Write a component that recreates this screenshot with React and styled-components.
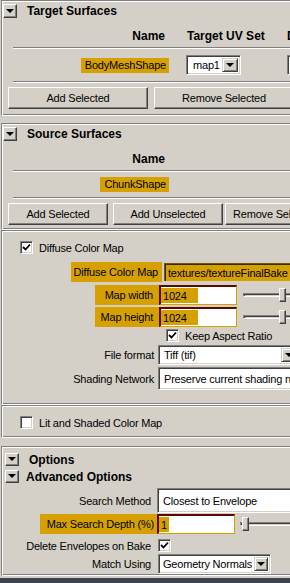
import React from "react";
import styled, { createGlobalStyle } from "styled-components";

const FACE = "#d4d0c8";
const HI = "#d6a100";

const GlobalStyle = createGlobalStyle`
  html, body {
    margin: 0;
    padding: 0;
  }
  body {
    background: ${FACE};
    font-family: "Liberation Sans", Arial, sans-serif;
    font-size: 11px;
    letter-spacing: -0.2px;
    color: #000;
    overflow: hidden;
  }
`;

const Window = styled.div`
  width: 290px;
  height: 583px;
  display: flex;
  flex-direction: column;
  overflow: hidden;
`;

const Panel = styled.div`
  flex: 1;
  width: 340px;
  overflow: hidden;
`;

const BottomEdge = styled.div`
  height: 5px;
  flex: none;
  background: #3b4450;
`;

// etched-in frame, like a Maya frameLayout
const Frame = styled.div`
  margin: ${(p) => p.$mt || 0}px 0 0 1px;
  padding: ${(p) => (p.$pt || 0) + 1}px 0 ${(p) => (p.$pb || 0) + 1}px 1px;
  border-top: 1px solid #808080;
  border-left: 1px solid #808080;
  border-bottom: 1px solid #fff;
  box-shadow: inset 1px 1px 0 #fff, inset 0 -1px 0 #808080;
`;

const FrameHeader = styled.div`
  display: flex;
  align-items: center;
  height: ${(p) => p.$h || 18}px;
  padding-left: ${(p) => p.$pl || 0}px;
`;

const CollapseButton = styled.div`
  width: 14px;
  height: ${(p) => p.$h || 14}px;
  box-sizing: border-box;
  flex: none;
  background: ${FACE};
  border-top: 1px solid #fff;
  border-left: 1px solid #fff;
  border-right: 1px solid #404040;
  border-bottom: 1px solid #404040;
  box-shadow: inset -1px -1px 0 #808080;
  display: flex;
  align-items: center;
  justify-content: center;
  &::after {
    content: "";
    border-left: 4px solid transparent;
    border-right: 4px solid transparent;
    border-top: 4px solid #000;
    margin: 0 1px 1px 0;
  }
`;

const FrameTitle = styled.span`
  margin-left: ${(p) => p.$gap ?? 10}px;
  font-weight: bold;
  font-size: 12px;
  letter-spacing: 0;
  white-space: nowrap;
`;

const ColumnHeader = styled.div`
  display: flex;
  height: 27px;
  box-sizing: border-box;
  padding-top: 5px;
  font-weight: bold;
  font-size: 12px;
  letter-spacing: 0;
  line-height: 13px;
  white-space: nowrap;
`;

const Cell = styled.div`
  flex: none;
  width: ${(p) => p.$w}px;
  box-sizing: border-box;
  display: flex;
  align-items: center;
  justify-content: ${(p) => (p.$right ? "flex-end" : "flex-start")};
  padding: 0 ${(p) => p.$pr || 0}px 0 ${(p) => p.$pl || 0}px;
`;

const TableRow = styled.div`
  display: flex;
  align-items: center;
  padding: ${(p) => p.$pad}px 0;
`;

const Separator = styled.div`
  margin-left: 10px;
  border-top: 1px solid #808080;
  border-bottom: 1px solid #fff;
`;

const NameTag = styled.span`
  background: ${HI};
  height: 15px;
  line-height: 15px;
  padding: 0 3px 0 4px;
  white-space: nowrap;
`;

const ButtonRow = styled.div`
  display: flex;
  margin-top: 4px;
  padding-left: 5px;
`;

const Button = styled.div`
  flex: none;
  width: ${(p) => p.$w}px;
  height: 22px;
  margin-left: ${(p) => p.$ml || 0}px;
  box-sizing: border-box;
  display: flex;
  align-items: center;
  justify-content: center;
  white-space: nowrap;
  background: ${FACE};
  border-top: 1px solid #fff;
  border-left: 1px solid #fff;
  border-right: 1px solid #404040;
  border-bottom: 1px solid #404040;
  box-shadow: inset -1px -1px 0 #808080;
`;

const Sunken = styled.div`
  box-sizing: border-box;
  border-top: 1px solid #808080;
  border-left: 1px solid #808080;
  border-right: 1px solid #fff;
  border-bottom: 1px solid #fff;
  box-shadow: inset 1px 1px 0 #404040, inset -1px -1px 0 ${FACE};
`;

const OptionMenu = styled(Sunken)`
  flex: none;
  width: ${(p) => p.$w}px;
  height: ${(p) => p.$h || 20}px;
  display: flex;
  align-items: center;
  background: #fff;
  padding: 2px 2px 2px ${(p) => p.$pl || 5}px;
`;

const MenuText = styled.span`
  flex: 1;
  white-space: nowrap;
  overflow: hidden;
`;

const DropArrow = styled.span`
  flex: none;
  width: ${(p) => p.$w || 16}px;
  align-self: stretch;
  box-sizing: border-box;
  background: ${FACE};
  border-top: 1px solid ${FACE};
  border-left: 1px solid ${FACE};
  border-right: 1px solid #404040;
  border-bottom: 1px solid #404040;
  box-shadow: inset 1px 1px 0 #fff, inset -1px -1px 0 #808080;
  display: flex;
  align-items: center;
  justify-content: center;
  &::after {
    content: "";
    border-left: 4px solid transparent;
    border-right: 4px solid transparent;
    border-top: 4px solid #000;
  }
`;

const CheckRow = styled.div`
  display: flex;
  align-items: center;
  margin-top: ${(p) => p.$mt || 0}px;
  padding-left: ${(p) => p.$pl || 0}px;
`;

const CheckBox = styled(Sunken)`
  flex: none;
  width: 13px;
  height: 13px;
  background: #fff;
  display: flex;
  align-items: center;
  justify-content: center;
`;

const CheckLabel = styled.span`
  margin-left: ${(p) => p.$gap ?? 6}px;
  white-space: nowrap;
`;

const FormRow = styled.div`
  display: flex;
  align-items: center;
  height: ${(p) => p.$h || 20}px;
  margin-top: ${(p) => p.$mt || 0}px;
`;

const LabelCell = styled.div`
  flex: none;
  width: ${(p) => p.$w}px;
  height: 100%;
  box-sizing: border-box;
  display: flex;
  align-items: center;
  justify-content: flex-end;
  padding-right: ${(p) => p.$pr || 0}px;
  white-space: nowrap;
`;

const HiLabel = styled.span`
  width: ${(p) => p.$w}px;
  height: 100%;
  box-sizing: border-box;
  display: flex;
  align-items: center;
  justify-content: flex-end;
  padding-right: ${(p) => p.$pr || 4}px;
  background: ${HI};
  white-space: nowrap;
`;

const HiTextField = styled.div`
  flex: none;
  width: 200px;
  height: 18px;
  margin-left: 2px;
  box-sizing: border-box;
  display: flex;
  align-items: center;
  padding-left: 3px;
  background: ${HI};
  border-top: 1px solid #6a5418;
  border-left: 1px solid #6a5418;
  box-shadow: inset 1px 1px 0 #3a2c00;
  white-space: nowrap;
`;

const NumField = styled.div`
  flex: none;
  width: ${(p) => p.$w}px;
  height: 100%;
  box-sizing: border-box;
  display: flex;
  align-items: center;
  background: #fff;
  border-top: 2px solid #5a0800;
  border-left: 2px solid #5a0800;
  border-right: 1px solid ${HI};
  border-bottom: 1px solid ${HI};
  padding: 1px 0;
`;

const NumValue = styled.span`
  width: ${(p) => p.$w}px;
  height: 100%;
  box-sizing: border-box;
  padding-left: 2px;
  display: flex;
  align-items: center;
  background: ${HI};
`;

const Slider = styled.div`
  position: relative;
  flex: none;
  width: 90px;
  height: 100%;
  margin-left: ${(p) => p.$ml || 6}px;
`;

const Groove = styled(Sunken)`
  position: absolute;
  left: 0;
  right: 0;
  top: 50%;
  height: 4px;
  margin-top: -2px;
  background: ${FACE};
`;

const Thumb = styled.div`
  position: absolute;
  top: 50%;
  width: 7px;
  height: 14px;
  margin-top: -7px;
  box-sizing: border-box;
  background: ${FACE};
  border-top: 1px solid #fff;
  border-left: 1px solid #fff;
  border-right: 1px solid #404040;
  border-bottom: 1px solid #404040;
  box-shadow: inset -1px -1px 0 #808080;
`;

const Gap = styled.div`
  flex: none;
  width: ${(p) => p.$w}px;
`;

function Check({ on }) {
  return (
    <CheckBox>
      {on && (
        <svg width="9" height="9" viewBox="0 0 9 9">
          <polyline points="1,4 3.5,6.5 8,1.5" fill="none" stroke="#000" strokeWidth="1.8" />
        </svg>
      )}
    </CheckBox>
  );
}

function Header({ title, h, btnH, gap, pl }) {
  return (
    <FrameHeader $h={h} $pl={pl}>
      <CollapseButton $h={btnH} />
      <FrameTitle $gap={gap}>{title}</FrameTitle>
    </FrameHeader>
  );
}

function SliderField({ value, thumb, ml, valueW, fieldW }) {
  return (
    <>
      <NumField $w={fieldW}>
        <NumValue $w={valueW}>{value}</NumValue>
      </NumField>
      <Slider $ml={ml}>
        <Groove />
        <Thumb style={{ left: thumb }} />
      </Slider>
    </>
  );
}

export default function App() {
  return (
    <Window>
      <GlobalStyle />
      <Panel>
        <Frame $pb={5}>
          <Header title="Target Surfaces" />
          <ColumnHeader>
            <Cell $w={170} $right $pr={8}>Name</Cell>
            <Cell $w={114} $pl={14}>Target UV Set</Cell>
            <Cell $w={40}>D</Cell>
          </ColumnHeader>
          <Separator />
          <TableRow $pad={6}>
            <Cell $w={170} $right $pr={4}>
              <NameTag>BodyMeshShape</NameTag>
            </Cell>
            <Cell $w={114} $pl={13}>
              <OptionMenu $w={55} $pl={6}>
                <MenuText>map1</MenuText>
                <DropArrow />
              </OptionMenu>
            </Cell>
            <Cell $w={40}>
              <OptionMenu $w={40} />
            </Cell>
          </TableRow>
          <Separator />
          <ButtonRow>
            <Button $w={140}>Add Selected</Button>
            <Button $w={140} $ml={6}>Remove Selected</Button>
          </ButtonRow>
        </Frame>

        <Frame $mt={7} $pb={3}>
          <Header title="Source Surfaces" />
          <ColumnHeader>
            <Cell $w={170} $right $pr={8}>Name</Cell>
          </ColumnHeader>
          <Separator />
          <TableRow $pad={5}>
            <Cell $w={170} $right $pr={4}>
              <NameTag>ChunkShape</NameTag>
            </Cell>
          </TableRow>
          <Separator />
          <ButtonRow>
            <Button $w={100}>Add Selected</Button>
            <Button $w={110} $ml={5}>Add Unselected</Button>
            <Button $w={100} $ml={2}>Remove Selected</Button>
          </ButtonRow>
        </Frame>

        <Frame $pb={13}>
          <CheckRow $mt={9} $pl={17}>
            <Check on />
            <CheckLabel>Diffuse Color Map</CheckLabel>
          </CheckRow>
          <FormRow $mt={8}>
            <LabelCell $w={159}>
              <HiLabel $w={91} $pr={4}>Diffuse Color Map</HiLabel>
            </LabelCell>
            <HiTextField>textures/textureFinalBake</HiTextField>
          </FormRow>
          <FormRow $mt={3}>
            <LabelCell $w={156}>
              <HiLabel $w={64} $pr={6}>Map width</HiLabel>
            </LabelCell>
            <SliderField value="1024" thumb={36} fieldW={78} valueW={37} />
          </FormRow>
          <FormRow $mt={2}>
            <LabelCell $w={156}>
              <HiLabel $w={64} $pr={6}>Map height</HiLabel>
            </LabelCell>
            <SliderField value="1024" thumb={36} fieldW={78} valueW={37} />
          </FormRow>
          <CheckRow $mt={2} $pl={163}>
            <Check on />
            <CheckLabel $gap={6}>Keep Aspect Ratio</CheckLabel>
          </CheckRow>
          <FormRow $mt={3}>
            <LabelCell $w={155} $pr={4}>File format</LabelCell>
            <OptionMenu $w={142}>
              <MenuText>Tiff (tif)</MenuText>
              <DropArrow />
            </OptionMenu>
          </FormRow>
          <FormRow $mt={2} $h={23}>
            <LabelCell $w={155} $pr={4}>Shading Network</LabelCell>
            <OptionMenu $w={170} $h={23}>
              <MenuText>Preserve current shading network</MenuText>
            </OptionMenu>
          </FormRow>
        </Frame>

        <Frame $pb={7}>
          <CheckRow $mt={9} $pl={17}>
            <Check />
            <CheckLabel>Lit and Shaded Color Map</CheckLabel>
          </CheckRow>
        </Frame>

        <Frame $mt={8} $pt={3}>
          <Header title="Options" h={17} btnH={13} pl={2} />
          <Header title="Advanced Options" h={17} btnH={13} pl={2} gap={7} />
          <FormRow $mt={3} $h={25}>
            <LabelCell $w={151} $pr={3}>Search Method</LabelCell>
            <Gap $w={3} />
            <OptionMenu $w={170} $h={25}>
              <MenuText>Closest to Envelope</MenuText>
            </OptionMenu>
          </FormRow>
          <FormRow $mt={1}>
            <LabelCell $w={154}>
              <HiLabel $w={117} $pr={3}>Max Search Depth (%)</HiLabel>
            </LabelCell>
            <SliderField value="1" thumb={2} fieldW={78} valueW={10} ml={5} />
          </FormRow>
          <FormRow $mt={5} $h={13}>
            <LabelCell $w={151} $pr={3}>Delete Envelopes on Bake</LabelCell>
            <Gap $w={4} />
            <Check on />
          </FormRow>
          <FormRow $mt={1} $h={21}>
            <LabelCell $w={151} $pr={3}>Match Using</LabelCell>
            <Gap $w={4} />
            <OptionMenu $w={113} $pl={4}>
              <MenuText>Geometry Normals</MenuText>
              <DropArrow $w={14} />
            </OptionMenu>
          </FormRow>
        </Frame>
      </Panel>
      <BottomEdge />
    </Window>
  );
}
